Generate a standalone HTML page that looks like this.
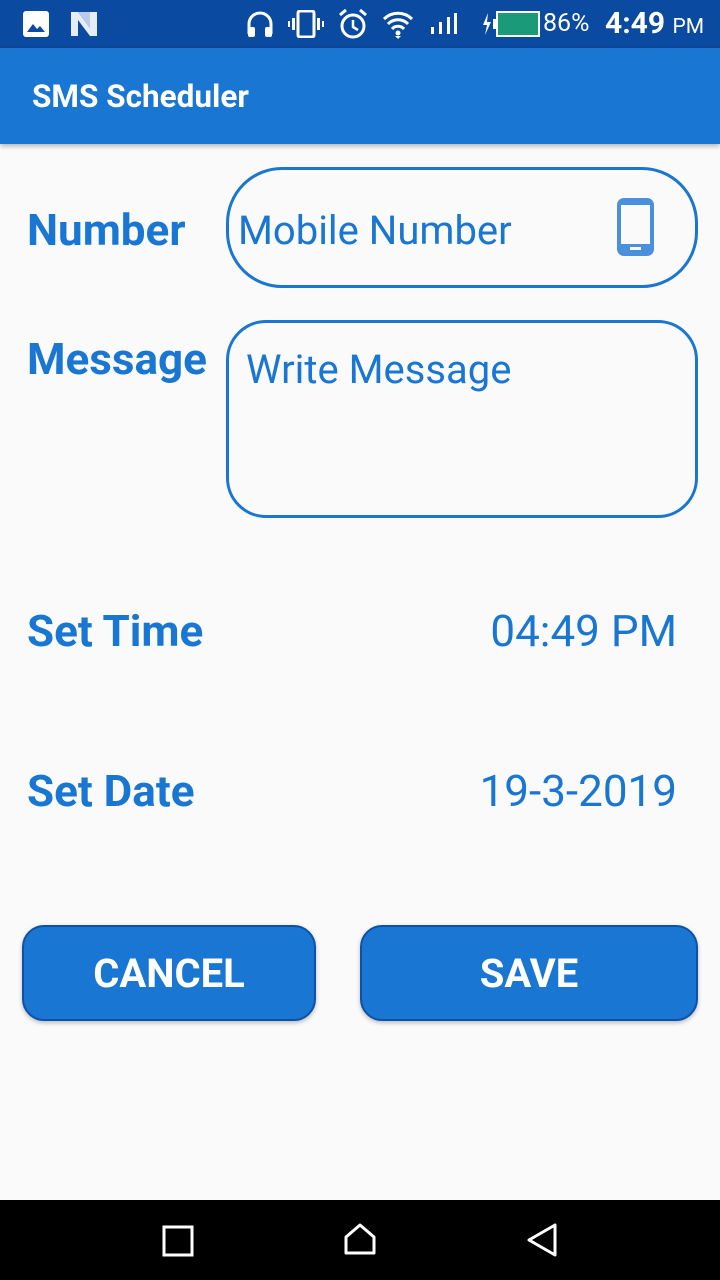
<!DOCTYPE html>
<html><head><meta charset="utf-8"><style>
*{margin:0;padding:0;box-sizing:border-box}
body{width:720px;height:1280px;background:#fafafa;font-family:"Roboto","Liberation Sans",sans-serif;position:relative;overflow:hidden}
.a{position:absolute}
.sb{left:0;top:0;width:720px;height:48px;background:#0a4aa0;color:#fff}
.ab{left:0;top:48px;width:720px;height:96px;background:#1976d2;box-shadow:0 2px 5px rgba(0,0,0,.3)}
.lbl{color:#1976d2;font-weight:bold;font-size:44px}
.txt{color:#1976d2;font-size:40px}
.box{border:3px solid #1976d2;}
.btn{background:#1976d2;border:2px solid #0d51a8;border-radius:22px;color:#fff;font-weight:bold;font-size:40px;display:flex;align-items:center;justify-content:center;box-shadow:0 2px 4px rgba(0,0,0,.25)}
.nav{left:0;top:1200px;width:720px;height:80px;background:#000}
</style></head><body>
<div class="a sb">
 <svg class="a" style="left:22px;top:10px" width="28" height="28" viewBox="0 0 28 28"><rect x="1" y="1" width="26" height="26" rx="3" fill="#fff"/><path d="M5 22 L11 14 L15 19 L18 16 L23 22Z" fill="#0a4aa0"/></svg>
 <svg class="a" style="left:70px;top:11px" width="28" height="26" viewBox="0 0 28 26"><path d="M1 1h7l12 16V1h7v24h-7L8 9v16H1z" fill="#fff" opacity=".9"/><path d="M8 1l12 16V1" fill="#b8cde8"/></svg>
 <svg class="a" style="left:246px;top:10px" width="28" height="28" viewBox="0 0 28 28"><path d="M3 24V14a11 11 0 0 1 22 0v10" fill="none" stroke="#fff" stroke-width="3"/><rect x="2" y="17" width="7" height="10" rx="2" fill="#fff"/><rect x="19" y="17" width="7" height="10" rx="2" fill="#fff"/></svg>
 <svg class="a" style="left:288px;top:10px" width="36" height="28" viewBox="0 0 36 28"><rect x="10" y="1" width="16" height="26" rx="2" fill="none" stroke="#fff" stroke-width="3"/><rect x="4" y="8" width="3" height="12" fill="#fff"/><rect x="29" y="8" width="3" height="12" fill="#fff"/><rect x="0" y="11" width="2" height="6" fill="#fff"/><rect x="34" y="11" width="2" height="6" fill="#fff"/></svg>
 <svg class="a" style="left:338px;top:9px" width="30" height="30" viewBox="0 0 30 30"><circle cx="15" cy="17" r="11" fill="none" stroke="#fff" stroke-width="3"/><path d="M15 11v7l5 3" fill="none" stroke="#fff" stroke-width="2.5"/><path d="M2 6l6-5M28 6l-6-5" stroke="#fff" stroke-width="3"/></svg>
 <svg class="a" style="left:382px;top:11px" width="32" height="28" viewBox="0 0 32 28"><path d="M2 8a20 20 0 0 1 28 0M6 13a14 14 0 0 1 20 0M10 18a8 8 0 0 1 12 0" fill="none" stroke="#fff" stroke-width="3"/><circle cx="16" cy="22" r="2.5" fill="#fff"/><path d="M13 25h6l-3 3z" fill="#fff"/></svg>
 <svg class="a" style="left:430px;top:12px" width="28" height="24" viewBox="0 0 28 24"><rect x="1" y="15" width="3" height="7" fill="#fff"/><rect x="9" y="10" width="3" height="12" fill="#fff"/><rect x="17" y="5" width="3" height="17" fill="#fff"/><rect x="24" y="1" width="3" height="21" fill="#fff"/></svg>
 <svg class="a" style="left:480px;top:11px" width="62" height="26" viewBox="0 0 62 26"><path d="M8 2L3 14h4l-2 10 6-13H7z" fill="#fff"/><rect x="13" y="8" width="4" height="10" fill="#fff"/><rect x="17" y="1" width="42" height="24" fill="#1b9a7a" stroke="#fff" stroke-width="2"/></svg>
 <div class="a" style="left:543px;top:9px;font-size:25px">86%</div>
 <div class="a" style="left:605px;top:6px;font-size:30px;font-weight:bold">4:49 <span style="font-size:21px;font-weight:normal">PM</span></div>
</div>
<div class="a ab"><div class="a" style="left:32px;top:30px;color:#fff;font-size:31.5px;font-weight:bold">SMS Scheduler</div></div>

<div class="a lbl" style="left:27px;top:204px">Number</div>
<div class="a box" style="left:226px;top:167px;width:472px;height:121px;border-radius:56px"></div>
<div class="a txt" style="left:238px;top:207px">Mobile Number</div>
<svg class="a" style="left:616px;top:197px" width="40" height="60" viewBox="0 0 40 60"><rect x="1" y="1" width="37" height="58" rx="7" fill="#4a90dc"/><rect x="5" y="8" width="29" height="39" fill="#fafafa"/><rect x="14" y="50" width="11" height="3" fill="#fafafa"/></svg>

<div class="a lbl" style="left:27px;top:333px">Message</div>
<div class="a box" style="left:226px;top:320px;width:472px;height:198px;border-radius:40px"></div>
<div class="a txt" style="left:246px;top:346px">Write Message</div>

<div class="a lbl" style="left:27px;top:605px">Set Time</div>
<div class="a txt" style="right:43px;top:605px;font-size:44px">04:49 PM</div>
<div class="a lbl" style="left:27px;top:765px">Set Date</div>
<div class="a txt" style="right:43px;top:765px;font-size:44px">19-3-2019</div>

<div class="a btn" style="left:22px;top:925px;width:294px;height:96px">CANCEL</div>
<div class="a btn" style="left:360px;top:925px;width:338px;height:96px">SAVE</div>

<div class="a nav">
 <svg class="a" style="left:162px;top:25px" width="32" height="32"><rect x="2" y="2" width="28" height="28" fill="none" stroke="#fff" stroke-width="3"/></svg>
 <svg class="a" style="left:343px;top:22px" width="34" height="34"><path d="M3 31V15L17 3l14 12v16z" fill="none" stroke="#fff" stroke-width="3" stroke-linejoin="round"/></svg>
 <svg class="a" style="left:525px;top:22px" width="34" height="36"><path d="M30 3v30L4 18z" fill="none" stroke="#fff" stroke-width="3" stroke-linejoin="round"/></svg>
</div>
</body></html>
